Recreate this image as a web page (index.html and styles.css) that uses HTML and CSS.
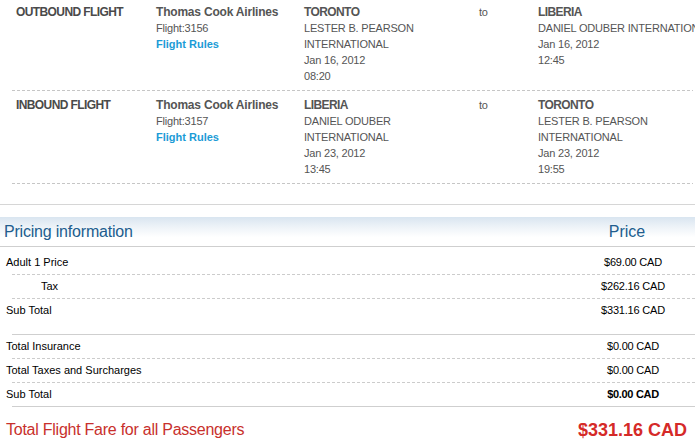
FILE: index.html
```html
<!DOCTYPE html>
<html lang="en">
<head>
<meta charset="utf-8">
<title>Flight summary</title>
<link rel="stylesheet" href="styles.css">
</head>
<body>
<div class="page">
  <section class="flights">
    <div class="flight-row">
      <div class="col col-label">OUTBOUND FLIGHT</div>
      <div class="col col-airline">
        <span class="airline">Thomas Cook Airlines</span>
        <span>Flight:3156</span>
        <a class="rules" href="#">Flight Rules</a>
      </div>
      <div class="col col-from">
        <span class="city">TORONTO</span>
        <span>LESTER B. PEARSON INTERNATIONAL</span>
        <span>Jan 16, 2012</span>
        <span>08:20</span>
      </div>
      <div class="col col-to">to</div>
      <div class="col col-dest">
        <span class="city">LIBERIA</span>
        <span class="nowrap">DANIEL ODUBER INTERNATIONAL</span>
        <span>Jan 16, 2012</span>
        <span>12:45</span>
      </div>
    </div>
    <div class="flight-row">
      <div class="col col-label">INBOUND FLIGHT</div>
      <div class="col col-airline">
        <span class="airline">Thomas Cook Airlines</span>
        <span>Flight:3157</span>
        <a class="rules" href="#">Flight Rules</a>
      </div>
      <div class="col col-from">
        <span class="city">LIBERIA</span>
        <span>DANIEL ODUBER INTERNATIONAL</span>
        <span>Jan 23, 2012</span>
        <span>13:45</span>
      </div>
      <div class="col col-to">to</div>
      <div class="col col-dest">
        <span class="city">TORONTO</span>
        <span>LESTER B. PEARSON INTERNATIONAL</span>
        <span>Jan 23, 2012</span>
        <span>19:55</span>
      </div>
    </div>
  </section>

  <div class="section-rule"></div>

  <section class="pricing">
    <div class="pricing-head">
      <span class="pricing-title">Pricing information</span>
      <span class="pricing-col">Price</span>
    </div>
    <div class="pricing-body">
      <div class="price-row"><span>Adult 1 Price</span><span class="amount">$69.00 CAD</span></div>
      <div class="rule-dashed"></div>
      <div class="price-row indent"><span>Tax</span><span class="amount">$262.16 CAD</span></div>
      <div class="rule-dashed"></div>
      <div class="price-row"><span>Sub Total</span><span class="amount">$331.16 CAD</span></div>

      <div class="rule-solid gap"></div>
      <div class="price-row"><span>Total Insurance</span><span class="amount">$0.00 CAD</span></div>
      <div class="rule-dashed"></div>
      <div class="price-row"><span>Total Taxes and Surcharges</span><span class="amount">$0.00 CAD</span></div>
      <div class="rule-dashed"></div>
      <div class="price-row"><span>Sub Total</span><span class="amount strong">$0.00 CAD</span></div>
      <div class="rule-solid"></div>
    </div>
    <div class="total-row">
      <span class="total-label">Total Flight Fare for all Passengers</span>
      <span class="total-amount">$331.16 CAD</span>
    </div>
  </section>
</div>
</body>
</html>
```

FILE: styles.css
```css
html, body {
  margin: 0;
  padding: 0;
  overflow: hidden;
  background: #ffffff;
}

body {
  font-family: "Liberation Sans", Arial, sans-serif;
  width: 695px;
}

.page {
  width: 695px;
  overflow: hidden;
}

/* ---------- Flights ---------- */
.flights {
  margin: -2px 2px 0 12px;
}

.flight-row {
  display: grid;
  grid-template-columns: 140px 148px 175px 59px 180px;
  padding: 6px 0 7px 4px;
  line-height: 16px;
  font-size: 11px;
  color: #555555;
  letter-spacing: -0.2px;
  background: linear-gradient(to right, #c6c6c6 3px, transparent 3px) 0 100% / 5px 1px repeat-x;
}

.col {
  display: flex;
  flex-direction: column;
}

.col-from {
  max-width: 150px;
}

.col-dest {
  max-width: 170px;
}

.nowrap {
  white-space: nowrap;
}

.col-label {
  font-size: 12px;
  font-weight: bold;
  color: #4a4a4a;
  letter-spacing: -0.6px;
}

.airline {
  font-size: 12px;
  font-weight: bold;
  color: #555555;
  letter-spacing: -0.2px;
}

.city {
  font-size: 12px;
  font-weight: bold;
  color: #555555;
  letter-spacing: -0.6px;
}

.rules {
  font-weight: bold;
  color: #1b9bd6;
  text-decoration: none;
  letter-spacing: 0;
}

/* ---------- Separator ---------- */
.section-rule {
  height: 1px;
  background: #d6d6d6;
  margin-top: 20px;
}

/* ---------- Pricing ---------- */
.pricing-head {
  margin-top: 12px;
  height: 29px;
  display: flex;
  align-items: center;
  justify-content: space-between;
  padding-left: 4px;
  font-size: 16px;
  color: #215d8e;
  letter-spacing: -0.2px;
  background: linear-gradient(to bottom, #d9e5f0 0%, #eef3f8 35%, #ffffff 70%);
  border-bottom: 1px solid #cfcfcf;
}

.pricing-col {
  width: 120px;
  margin-right: 8px;
  text-align: center;
  letter-spacing: 0;
}

.pricing-body {
  padding-top: 4px;
}

.price-row {
  display: grid;
  grid-template-columns: 1fr 120px;
  padding: 0 2px 0 6px;
  line-height: 23px;
  font-size: 11px;
  color: #000000;
}

.price-row.indent {
  padding-left: 41px;
}

.amount {
  text-align: center;
  letter-spacing: -0.2px;
}

.amount.strong {
  font-weight: bold;
  letter-spacing: -0.3px;
}

.rule-dashed {
  height: 1px;
  margin-left: 12px;
  background: linear-gradient(to right, #cccccc 3px, transparent 3px) 0 0 / 5px 1px repeat-x;
}

.rule-solid {
  height: 1px;
  margin-left: 12px;
  background: #cfcfcf;
}

.rule-solid.gap {
  margin-top: 12px;
}

.total-row {
  display: flex;
  align-items: center;
  justify-content: space-between;
  padding: 13px 8px 0 6px;
  line-height: 20px;
}

.total-label {
  font-size: 16px;
  color: #c8302c;
  letter-spacing: -0.25px;
}

.total-amount {
  font-size: 18px;
  font-weight: bold;
  color: #d52a28;
}
```
